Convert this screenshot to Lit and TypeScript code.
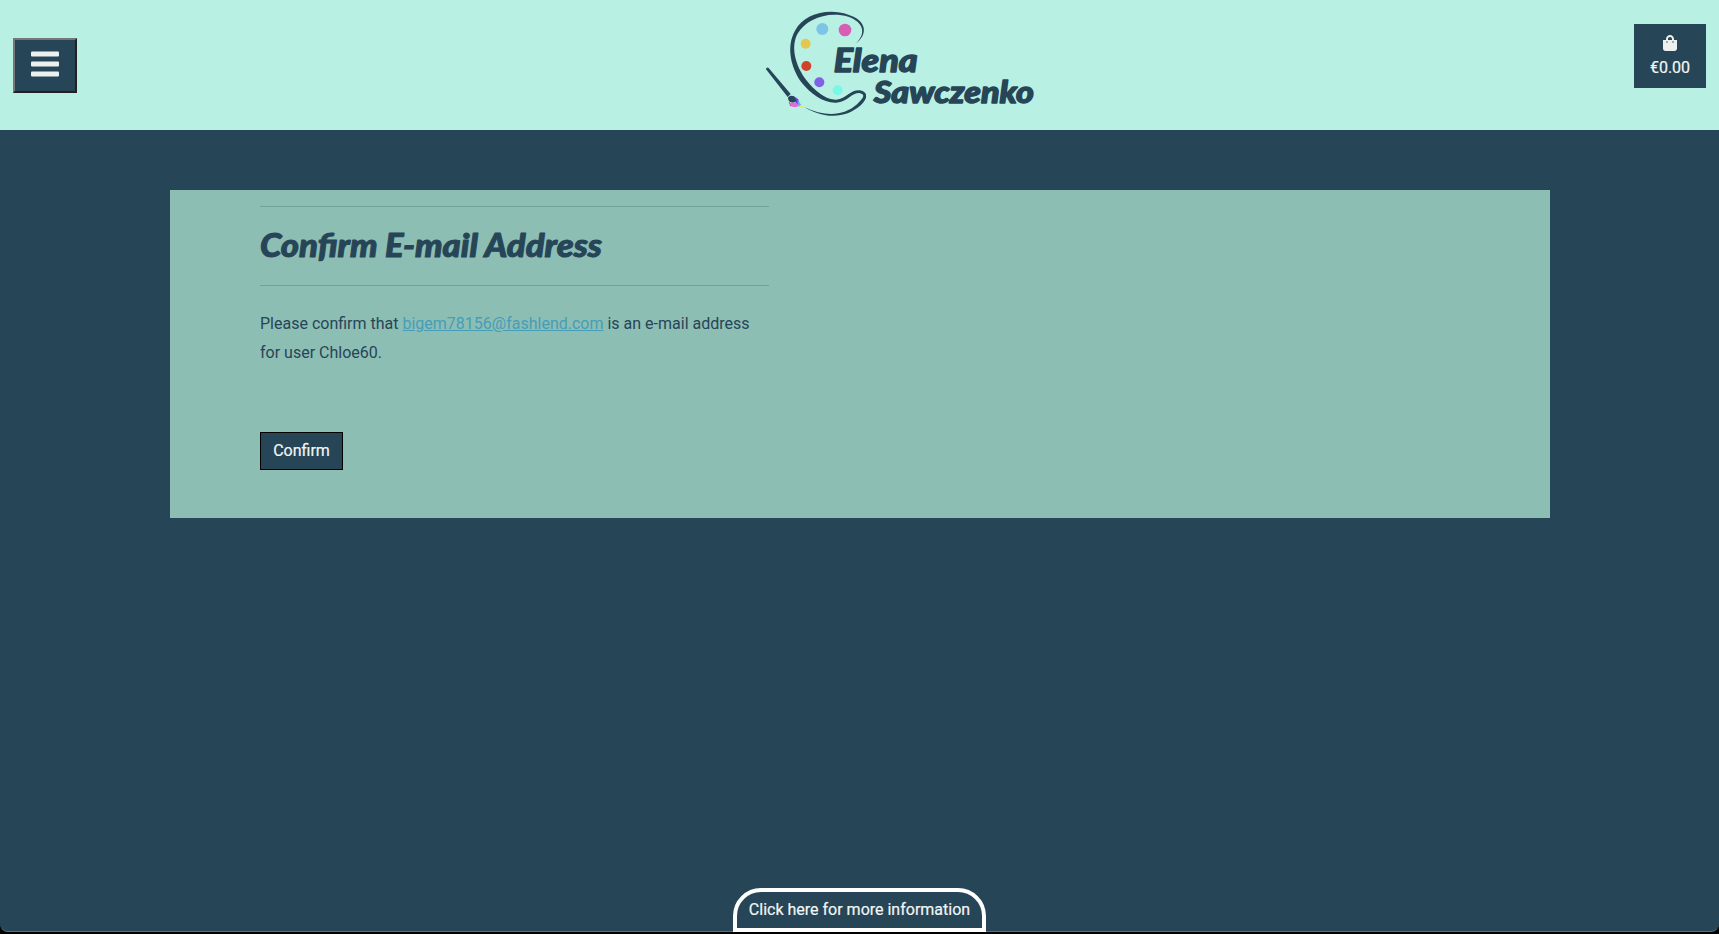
import { LitElement, html, css } from "lit";
import { customElement } from "lit/decorators.js";

@customElement("site-logo")
class SiteLogo extends LitElement {
  static styles = css`
    :host { display: block; width: 290px; height: 130px; }
    svg { display: block; }
    .line { fill: none; stroke: #264557; stroke-linecap: round; stroke-linejoin: round; }
    .ink { fill: #264557; }
    .name { fill: #264557; stroke: #264557; stroke-width: 4; stroke-linejoin: round; font: italic 900 90px Lato, sans-serif; }
    .first { font-size: 96px; }
  `;
  render() {
    return html`
      <svg width="290" height="130" viewBox="0 0 870 390" role="img" aria-label="Elena Sawczenko">
        <path class="ink" d="M300 132C336 102 326 66 280 50C215 32 154 59 129 99C105 140 122 197 153 239C179 272 212 300 244 299C276 296 285 269 315 271C344 277 334 300 317 316C271 357 207 357 147 321C208 350 265 350 307 312C323 296 335 283 312 279C290 277 280 305 244 308C206 310 167 281 141 249C107 204 93 139 120 92C147 42 217 23 280 44C337 61 340 105 300 132Z"/>
        <path class="line" stroke-width="5" d="M184 277C205 295 226 303 244 303C277 300 283 272 313 276C341 280 332 297 315 313"/>
        <circle cx="202" cy="87" r="18" fill="#7bc6e8"/>
        <circle cx="270" cy="90" r="19" fill="#d85eb5"/>
        <circle cx="152" cy="131" r="15" fill="#e4c653"/>
        <circle cx="154" cy="198" r="15" fill="#cf432b"/>
        <circle cx="193" cy="247" r="15" fill="#8060e4"/>
        <circle cx="248" cy="271" r="15" fill="#7bf7e5"/>
        <path class="ink" d="M33 208Q34 200 41 204L107 282L98 291Z"/>
        <path fill="#7d40ef" d="M119 291Q132 294 134 313L123 314Z"/>
        <path fill="#56bce8" d="M127 300L139 315L131 320Z"/>
        <path fill="#f0e65b" d="M134 315L147 320L136 324Z"/>
        <path fill="#d52e61" d="M101 305L106 319L119 317Z"/>
        <path fill="#e568dc" d="M104 310Q118 301 133 315Q128 323 117 321Q107 321 104 310Z"/>
        <path class="ink" d="M100 291Q108 284 118 289L125 304Q116 309 105 306Q97 299 100 291Z"/>
        <text class="name first" x="236" y="216" textLength="252" lengthAdjust="spacingAndGlyphs">Elena</text>
        <text class="name" x="356" y="310" textLength="481" lengthAdjust="spacingAndGlyphs">Sawczenko</text>
      </svg>`;
  }
}

@customElement("app-root")
class AppRoot extends LitElement {
  static styles = css`
    :host { display: flex; flex-direction: column; height: 934px; overflow: hidden; background: #000; color: #264557; font: 16px/28.8px Roboto, sans-serif; }
    * { box-sizing: border-box; }
    .page { height: 932px; display: flex; flex-direction: column; background: #264557; border-bottom: 1px solid #53717e; border-radius: 0 0 8px 8px; }
    .header { flex: none; height: 130px; background: #b8f1e4; display: flex; align-items: flex-start; padding: 0 13px; }
    .menu { width: 64px; height: 55px; margin: 38px 678px 0 0; padding: 0 0 3px; background: #264557; border: 2px solid; border-color: #767676 #212121 #212121 #767676; display: flex; align-items: center; justify-content: center; }
    .menu svg { display: block; }
    .basket { width: 72px; height: 64px; margin: 24px 0 0 auto; background: #264557; color: #f2f6f5; display: flex; flex-direction: column; align-items: center; padding-top: 11px; line-height: 24px; -webkit-text-stroke: .2px #f2f6f5; }
    .basket svg { display: block; margin-bottom: 5px; }
    .card { flex: none; width: 1380px; height: 328px; margin: 60px 0 0 170px; padding: 16px 90px 0; background: #8dbeb4; }
    .content { width: 509px; }
    .title { height: 80px; margin: 0; padding-top: 19px; border: solid #72a299; border-width: 1px 0; }
    .title svg { display: block; overflow: visible; }
    .heading { fill: #264557; stroke: #264557; stroke-width: 1; stroke-linejoin: round; font: italic 900 32px Lato, sans-serif; }
    .text { margin: 24px 0 64px; }
    .link { color: #469db8; text-decoration: underline; }
    .confirm { display: block; width: 83px; height: 38px; padding: 0; border: 1px solid #000; background: #264557; color: #f2f6f5; font: 16px/24px Roboto, sans-serif; -webkit-text-stroke: .2px #f2f6f5; }
    .info { width: 253px; height: 44px; margin: auto 0 -1px 733px; border: 4px solid #fff; border-radius: 28px 28px 0 0; background: #264557; color: #f2f6f5; line-height: 35px; text-align: center; white-space: nowrap; -webkit-text-stroke: .2px #f2f6f5; }
  `;
  render() {
    return html`
      <div class="page">
        <header class="header">
          <button class="menu" aria-label="Menu">
            <svg width="28" height="26" viewBox="0 0 28 26"><g fill="#ecf1f0"><rect y=".5" width="28" height="5" rx="1"/><rect y="10.5" width="28" height="5" rx="1"/><rect y="20.5" width="28" height="5" rx="1"/></g></svg>
          </button>
          <site-logo></site-logo>
          <div class="basket">
            <svg width="14" height="16" viewBox="0 0 448 512"><path fill="#ecf1f0" d="M352 160v-32C352 57.400 294.600 0 224 0S96 57.400 96 128v32H0v272c0 44.200 35.800 80 80 80h288c44.200 0 80-35.800 80-80V160h-96zm-192-32c0-35.300 28.700-64 64-64s64 28.700 64 64v32H160v-32zm160 120a24 24 0 1 1 0-48 24 24 0 0 1 0 48zm-192 0a24 24 0 1 1 0-48 24 24 0 0 1 0 48z"/></svg>
            <span>€0.00</span>
          </div>
        </header>
        <main class="card">
          <div class="content">
            <h1 class="title">
              <svg width="343" height="40"><text class="heading" x="0" y="30.5" textLength="342" lengthAdjust="spacingAndGlyphs">Confirm E-mail Address</text></svg>
            </h1>
            <p class="text">Please confirm that <a class="link">bigem78156@fashlend.com</a> is an e-mail address for user Chloe60.</p>
            <button class="confirm">Confirm</button>
          </div>
        </main>
        <div class="info">Click here for more information</div>
      </div>`;
  }
}
